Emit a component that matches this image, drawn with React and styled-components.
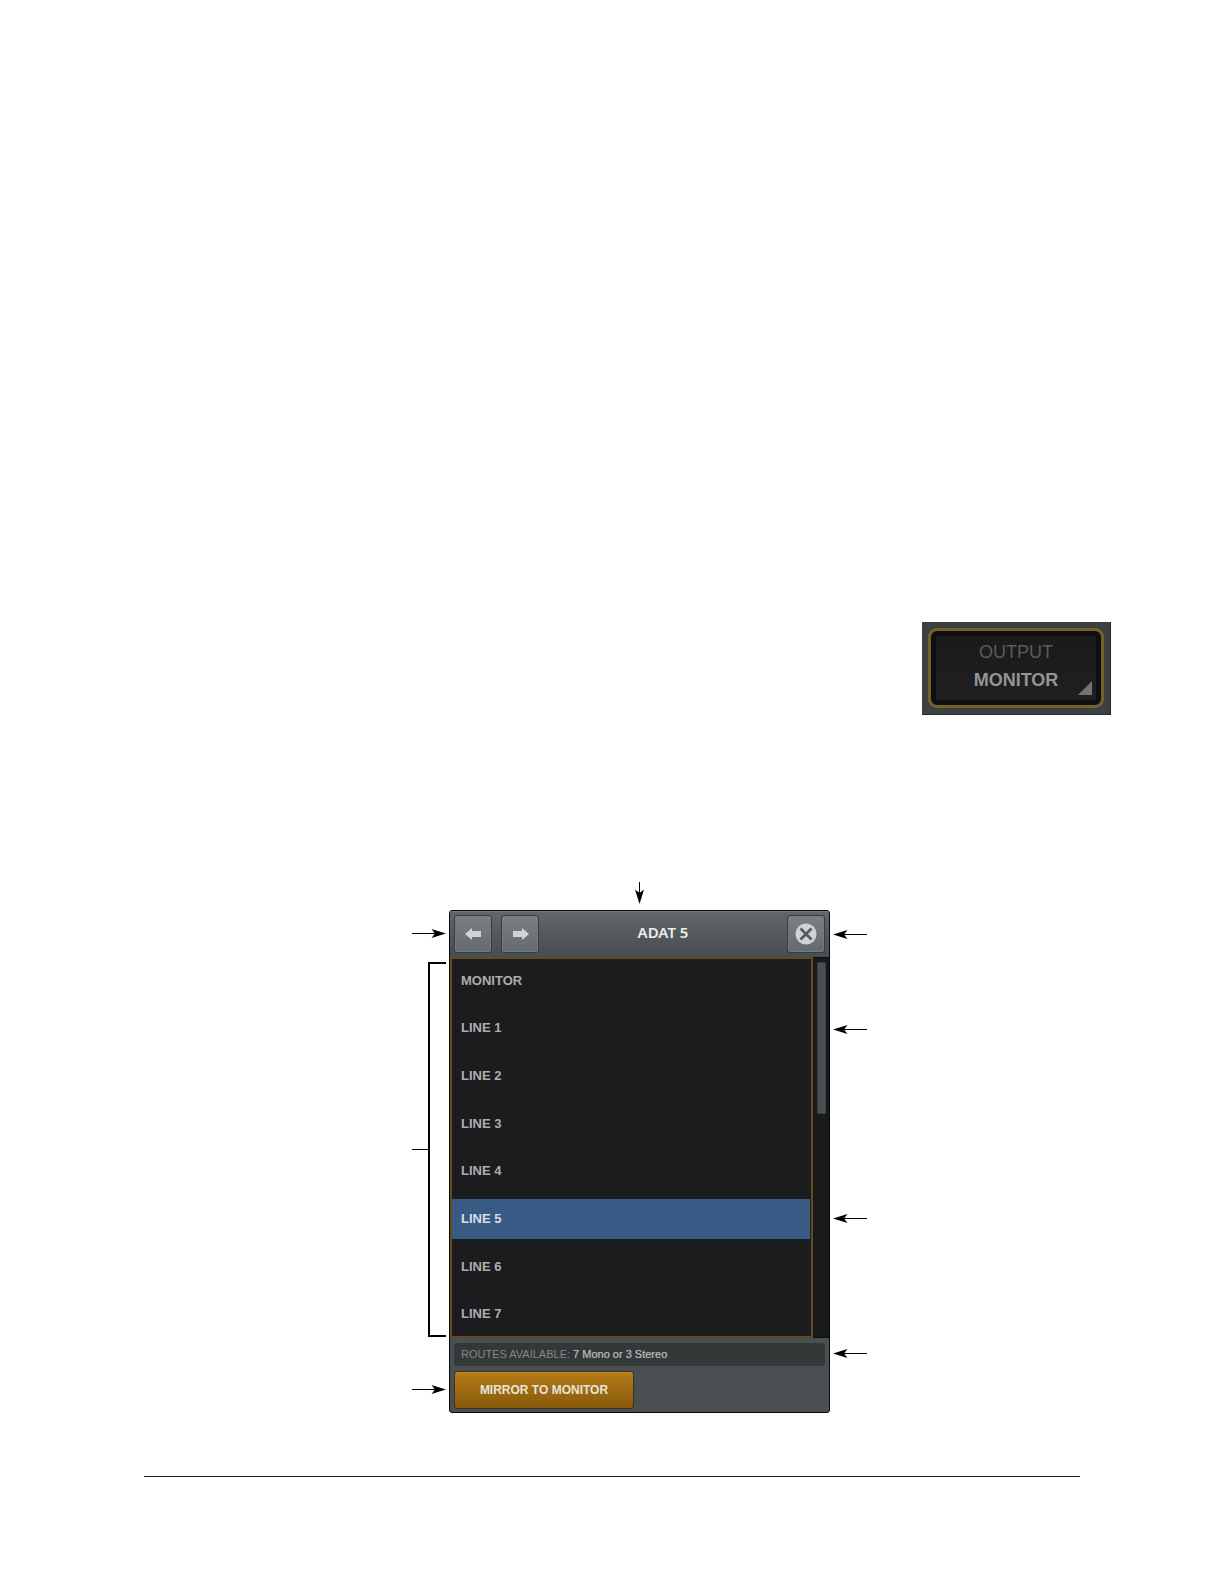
import { useState } from "react";
import styled, { createGlobalStyle } from "styled-components";

const GlobalStyle = createGlobalStyle`
    *, *::before, *::after {
        box-sizing: border-box;
    }

    body {
        margin: 0;
        background-color: #ffffff;
        font-family: "Liberation Sans", Arial, sans-serif;
    }

    button {
        font-family: inherit;
        padding: 0;
        cursor: pointer;
    }
`

const Page = styled.main`
    display: flex;
    flex-direction: column;
    padding: 622px 113px 107px 144px;
`

const OutputFrame = styled.div`
    align-self: flex-end;
    padding: 6px;
    background: #3d4043;
    border-right: 1px solid #25272a;
    border-bottom: 1px solid #25272a;
`

const OutputButton = styled.button`
    position: relative;
    display: flex;
    width: 176px;
    height: 80px;
    padding: 5px;
    border: 3px solid #75622a;
    border-radius: 9px;
    background: #101010;

    > span {
        flex: 1;
        display: flex;
        flex-direction: column;
        align-items: center;
        justify-content: center;
        padding-bottom: 4px;
        background: linear-gradient(#1a1a1a, #202020);
        font-size: 18px;
        line-height: 28px;
        color: #595b5c;
    }

    strong {
        color: #939596;
    }

    svg {
        position: absolute;
        right: 9px;
        bottom: 10px;
    }
`

const Figure = styled.figure`
    display: grid;
    grid-template-columns: 37px minmax(0, 381px) 37px;
    justify-content: center;
    row-gap: 6px;
    margin: 167px 0 0;
    padding-left: 24px;
`

const TopCallout = styled.div`
    grid-column: 2;
    display: flex;
    justify-content: center;
`

const Callouts = styled.div`
    display: flex;
    flex-direction: column;
    align-items: ${({ $side }) => ($side === "left" ? "flex-start" : "flex-end")};
    grid-column: ${({ $side }) => ($side === "left" ? 1 : 3)};
`

const Callout = styled.div`
    display: flex;
    margin-top: ${({ $gap }) => $gap}px;
`

const Bracket = styled.div`
    display: flex;
    align-items: center;
    width: 34px;
    height: 375px;
    margin-top: 24px;

    &::before {
        content: "";
        flex: 1;
        height: 1px;
        background: #000000;
    }

    &::after {
        content: "";
        width: 18px;
        height: 100%;
        border: 2px solid #000000;
        border-right: none;
    }
`

const Panel = styled.section`
    border: 1px solid #080a0b;
    border-radius: 3px;
    background: #4a5052;
    overflow: hidden;
`

const Header = styled.header`
    display: flex;
    align-items: flex-start;
    gap: 9px;
    height: 46px;
    padding: 4px;
    background: linear-gradient(#62686a, #464c4f);
    box-shadow: inset 0 1px 0 #70777a;
`

const Title = styled.h1`
    flex: 1;
    margin: 0;
    font-family: "Noto Sans", sans-serif;
    font-size: 15px;
    font-weight: 600;
    line-height: 35px;
    text-align: center;
    color: #eeeeee;
`

const IconButton = styled.button`
    display: flex;
    align-items: center;
    justify-content: center;
    width: 38px;
    height: 38px;
    border: 1px solid #383d40;
    border-radius: 3px;
    background: linear-gradient(#7b8183, #636a6d);
    box-shadow: inset 0 0 0 1px #757c7e;
`

const Body = styled.div`
    display: flex;
    height: 381px;
    background: #17191b;
`

const List = styled.ul`
    flex: 1;
    display: flex;
    flex-direction: column;
    justify-content: space-between;
    margin: 0;
    padding: 1px 1px 2px 0;
    border: 2px solid #5f4d1d;
    background: #1c1c1e;
    list-style: none;
`

const Route = styled.button`
    display: block;
    width: 100%;
    height: 40px;
    padding-left: 9px;
    border: none;
    background: ${({ $selected }) => ($selected ? "#3a5a86" : "transparent")};
    color: ${({ $selected }) => ($selected ? "#d9dde4" : "#adadae")};
    font-size: 13px;
    font-weight: bold;
    text-align: left;
`

const Track = styled.div`
    width: 16px;
    padding: 4px 3px 0 4px;
    border-top: 1px solid #0b0c0d;
    border-bottom: 1px solid #0b0c0d;
    background: #17191b;
`

const Thumb = styled.div`
    height: 152px;
    border: 1px solid #3d4144;
    border-radius: 1px;
    background: #4b4f51;
`

const Footer = styled.footer`
    display: flex;
    flex-direction: column;
    align-items: flex-start;
    gap: 5px;
    padding: 5px 4px 3px;
`

const Status = styled.p`
    align-self: stretch;
    margin: 0;
    padding: 0 7px;
    border-radius: 3px;
    background: #333839;
    font-size: 11px;
    line-height: 23px;
    color: #858989;

    span {
        color: #b6b9b9;
        text-shadow: 0 0 1px #8b8e8e;
    }
`

const MirrorButton = styled.button`
    width: 180px;
    height: 38px;
    border: 1px solid #3a3321;
    border-radius: 3px;
    background: linear-gradient(#b67c18, #86590b);
    box-shadow: inset 0 1px 0 #c38c2c;
    font-size: 12px;
    font-weight: bold;
    color: #e9e4da;
`

const Rule = styled.hr`
    width: calc(100% - 31px);
    height: 1px;
    margin: 63px 0 0;
    border: none;
    background: #231f20;
`

function ArrowRight() {
    return (
        <svg width="34" height="9" viewBox="0 0 34 9" aria-hidden="true">
            <path d="M0 4H24V5H0Z" />
            <path d="M34 4.5L19.5 0L23 4.5L19.5 9Z" />
        </svg>
    )
}

function ArrowLeft() {
    return (
        <svg width="34" height="9" viewBox="0 0 34 9" aria-hidden="true">
            <path d="M10 4H34V5H10Z" />
            <path d="M0 4.5L14.5 0L11 4.5L14.5 9Z" />
        </svg>
    )
}

function ArrowDown() {
    return (
        <svg width="9" height="22" viewBox="0 0 9 22" aria-hidden="true">
            <path d="M4 0H5V12H4Z" />
            <path d="M4.5 22L0 7.5L4.5 11L9 7.5Z" />
        </svg>
    )
}

function BlockArrow({ points }) {
    return (
        <svg width="17" height="12" viewBox="0 0 17 12" aria-hidden="true">
            <polygon points={points} fill="#d2d4d4" />
        </svg>
    )
}

const routes = ["MONITOR", "LINE 1", "LINE 2", "LINE 3", "LINE 4", "LINE 5", "LINE 6", "LINE 7"];

function RoutePanel() {
    const [selected, setSelected] = useState("LINE 5");

    return (
        <Panel>
            <Header>
                <IconButton aria-label="Previous">
                    <BlockArrow points="0,6 7,0 7,3 16,3 16,9 7,9 7,12" />
                </IconButton>
                <IconButton aria-label="Next">
                    <BlockArrow points="17,6 10,0 10,3 1,3 1,9 10,9 10,12" />
                </IconButton>
                <Title>ADAT 5</Title>
                <IconButton aria-label="Close">
                    <svg width="22" height="22" viewBox="0 0 22 22" aria-hidden="true">
                        <circle cx="11" cy="11" r="10.5" fill="#d0d2d3" />
                        <path d="M5.5 5.5L16.5 16.5M16.5 5.5L5.5 16.5" stroke="#54595c" strokeWidth="2.6" />
                    </svg>
                </IconButton>
            </Header>
            <Body>
                <List>
                    {routes.map((name) => (
                        <li key={name}>
                            <Route
                                $selected={name === selected}
                                aria-pressed={name === selected}
                                onClick={() => setSelected(name)}
                            >
                                {name}
                            </Route>
                        </li>
                    ))}
                </List>
                <Track>
                    <Thumb />
                </Track>
            </Body>
            <Footer>
                <Status>
                    ROUTES AVAILABLE: <span>7 Mono or 3 Stereo</span>
                </Status>
                <MirrorButton>MIRROR TO MONITOR</MirrorButton>
            </Footer>
        </Panel>
    )
}

function App() {
    return (
        <Page>
            <GlobalStyle />
            <OutputFrame>
                <OutputButton>
                    <span>
                        OUTPUT
                        <strong>MONITOR</strong>
                    </span>
                    <svg width="14" height="14" viewBox="0 0 14 14" aria-hidden="true">
                        <path d="M14 0V14H0Z" fill="#727475" />
                    </svg>
                </OutputButton>
            </OutputFrame>
            <Figure>
                <TopCallout><ArrowDown /></TopCallout>
                <Callouts $side="left">
                    <Callout $gap={19}><ArrowRight /></Callout>
                    <Bracket />
                    <Callout $gap={48}><ArrowRight /></Callout>
                </Callouts>
                <RoutePanel />
                <Callouts $side="right">
                    <Callout $gap={20}><ArrowLeft /></Callout>
                    <Callout $gap={86}><ArrowLeft /></Callout>
                    <Callout $gap={180}><ArrowLeft /></Callout>
                    <Callout $gap={126}><ArrowLeft /></Callout>
                </Callouts>
            </Figure>
            <Rule />
        </Page>
    )
}

export default App;
